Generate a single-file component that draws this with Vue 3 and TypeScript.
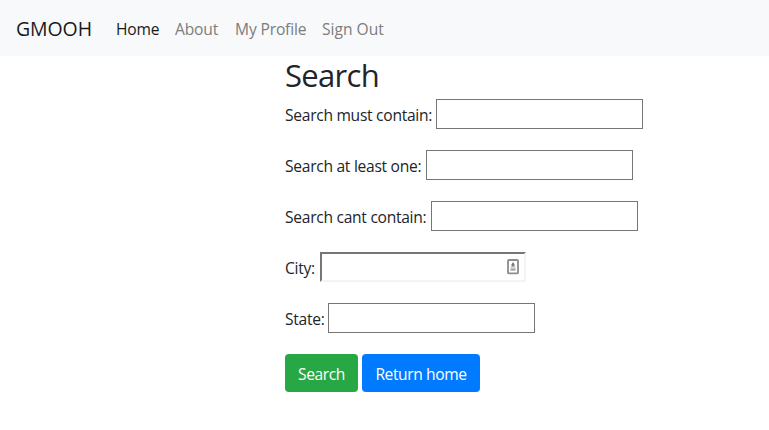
<script setup lang="ts">
import { ref } from 'vue'

interface Field {
  id: string
  label: string
}

const links = [
  { id: 'home', label: 'Home' },
  { id: 'about', label: 'About' },
  { id: 'profile', label: 'My Profile' },
  { id: 'signout', label: 'Sign Out' },
]

const fields: Field[] = [
  { id: 'must', label: 'Search must contain:' },
  { id: 'any', label: 'Search at least one:' },
  { id: 'none', label: 'Search cant contain:' },
  { id: 'city', label: 'City:' },
  { id: 'state', label: 'State:' },
]

const values = ref<Record<string, string>>({ must: '', any: '', none: '', city: '', state: '' })
</script>

<template>
  <div class="page">
    <nav class="navbar">
      <a class="brand">GMOOH</a>
      <a v-for="link in links" :key="link.id" class="link" :class="link.id">{{ link.label }}</a>
    </nav>
    <main class="content">
      <h2 class="title">Search</h2>
      <form class="form" @submit.prevent>
        <div v-for="field in fields" :key="field.id" class="row" :class="field.id">
          <label class="label" :for="field.id">{{ field.label }}</label>
          <div class="control">
            <input :id="field.id" v-model="values[field.id]" class="input" type="text" />
            <svg v-if="field.id === 'city'" class="autofill" width="12" height="16" viewBox="0 0 12 16">
              <rect x="1" y="1" width="10" height="13.4" rx="1" fill="#fff" stroke="#8c8c8c" stroke-width="1.8" />
              <path d="M6 3 L7.4 5.2 V7.4 H4.6 V5.2 Z" fill="#7c7c7c" />
              <path d="M3.6 7.4 H8.4 V8.5 H3.6 Z" fill="#b0b0b0" />
              <path d="M3.4 9.4 H8.6 V11.7 H3.4 Z" fill="#a5a5a5" />
            </svg>
          </div>
        </div>
        <div class="actions">
          <button class="btn success" type="submit">Search</button>
          <button class="btn primary" type="button">Return home</button>
        </div>
      </form>
    </main>
  </div>
</template>

<style>
body {
  margin: 0;
  background: #fff;
}
</style>

<style scoped>
.page {
  height: 430px;
  overflow: hidden;
  font-family: 'Segoe UI', 'Open Sans', 'Noto Sans', sans-serif;
  font-size: 15.6px;
  line-height: 24px;
  color: #212529;
}
.navbar {
  box-sizing: border-box;
  height: 56px;
  padding: 0 16px;
  display: flex;
  align-items: center;
  background: #f8f9fa;
  white-space: nowrap;
}
.brand {
  width: 76px;
  margin-right: 24px;
  padding-top: 1px;
  font-size: 19.5px;
  line-height: 30px;
  letter-spacing: -0.1px;
  color: #1a1a1a;
}
.link {
  margin-right: 16px;
  padding-top: 2px;
  letter-spacing: -0.15px;
  color: #7c7d7d;
}
.home {
  width: 43px;
  color: #1a1a1a;
}
.about {
  width: 44px;
}
.profile {
  width: 71px;
}
.signout {
  letter-spacing: 0;
}
.content {
  padding-left: 285px;
}
.title {
  margin: 0;
  height: 43px;
  font-size: 31px;
  font-weight: 400;
  line-height: 38px;
  letter-spacing: -0.7px;
}
.form {
  display: flex;
  flex-direction: column;
  gap: 21px;
}
.row {
  display: flex;
  height: 30px;
}
.label {
  flex: none;
  padding-top: 4px;
  white-space: nowrap;
  letter-spacing: -0.28px;
}
.row.must .label { width: 151px; }
.row.any .label { width: 141px; }
.row.none .label { width: 146px; }
.row.city .label { width: 35px; }
.row.state .label { width: 43px; }
.control {
  position: relative;
  width: 207px;
  height: 30px;
}
.input {
  display: block;
  box-sizing: border-box;
  width: 100%;
  height: 100%;
  margin: 0;
  padding: 1px 4px;
  border: 1px solid #767676;
  border-radius: 0;
  background: #fff;
  font: inherit;
  outline: none;
}
.city .control {
  width: 206px;
}
.city .input {
  border: 2px solid;
  border-color: #767676 #f4f4f4 #f4f4f4 #767676;
}
.autofill {
  position: absolute;
  top: 7px;
  right: 7px;
}
.actions {
  display: flex;
  gap: 4px;
}
.btn {
  box-sizing: border-box;
  height: 38px;
  padding: 2px 0 0;
  border: 0;
  border-radius: 4px;
  color: #fff;
  font: inherit;
  letter-spacing: -0.4px;
  white-space: nowrap;
}
.success {
  width: 73px;
  background: #28a745;
}
.primary {
  width: 118px;
  background: #007bff;
}
</style>
